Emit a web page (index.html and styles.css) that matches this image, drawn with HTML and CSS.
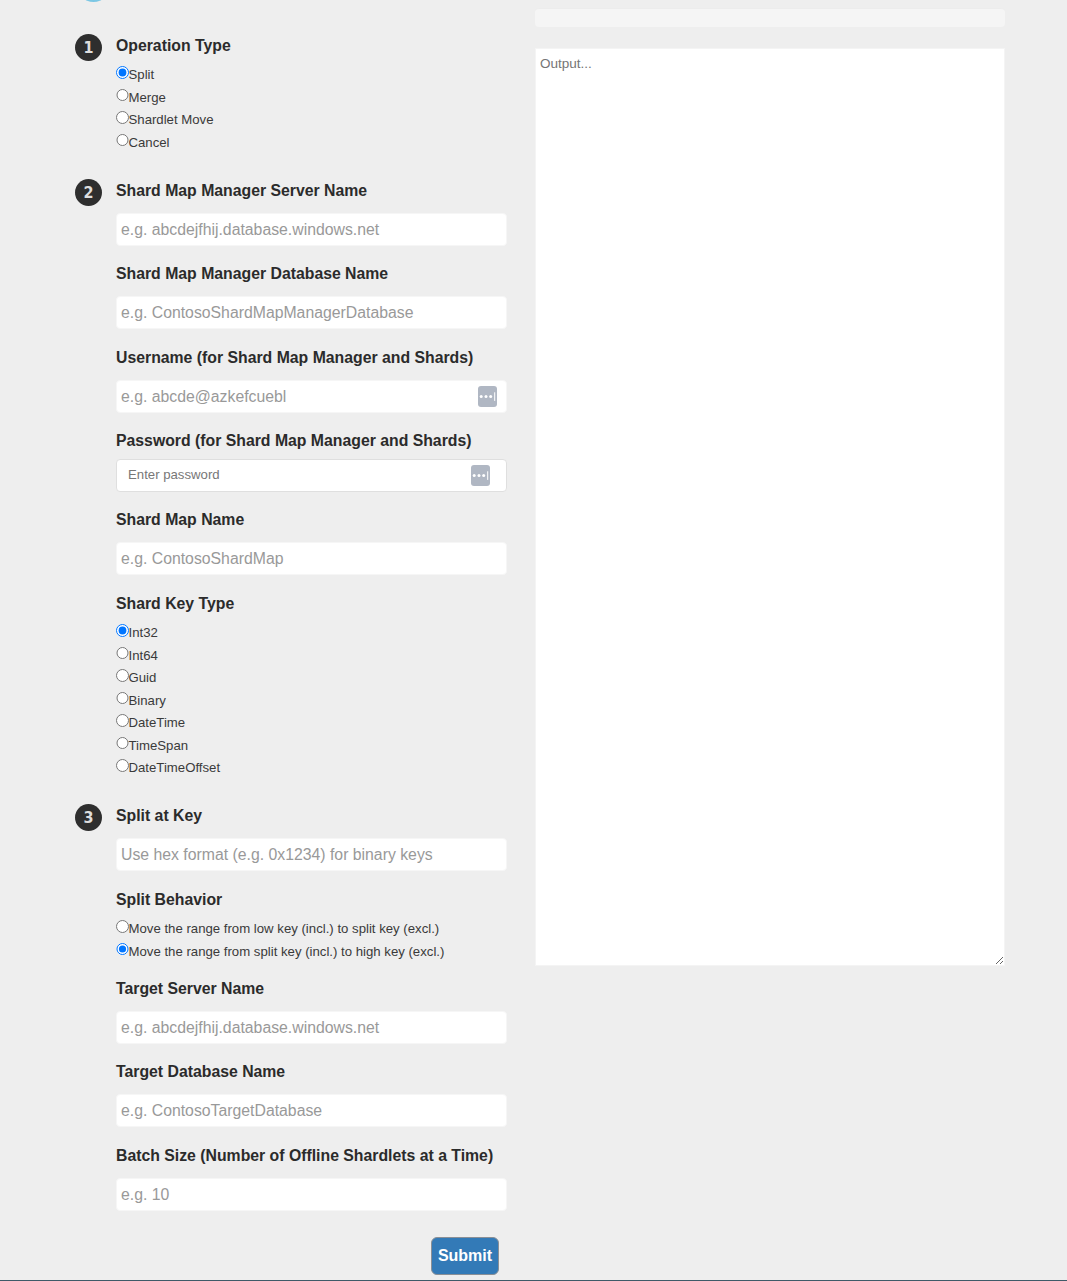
FILE: index.html
```html
<!DOCTYPE html>
<html lang="en">
<head>
<meta charset="utf-8">
<title>Split-Merge</title>
<link rel="stylesheet" href="styles.css">
</head>
<body>
<main class="page">
  <form class="form-col">
    <div class="logo"></div>

    <section class="step step-first">
      <span class="badge">1</span>
      <div class="step-body">
        <h3 class="field-label field-label-radios">Operation Type</h3>
        <div class="radios">
          <label class="radio"><input type="radio" name="op" checked>Split</label>
          <label class="radio"><input type="radio" name="op">Merge</label>
          <label class="radio"><input type="radio" name="op">Shardlet Move</label>
          <label class="radio"><input type="radio" name="op">Cancel</label>
        </div>
      </div>
    </section>

    <section class="step step-second">
      <span class="badge">2</span>
      <div class="step-body">
        <div class="field field-first">
          <h3 class="field-label">Shard Map Manager Server Name</h3>
          <input class="text-input" type="text" placeholder="e.g. abcdejfhij.database.windows.net">
        </div>
        <div class="field">
          <h3 class="field-label">Shard Map Manager Database Name</h3>
          <input class="text-input" type="text" placeholder="e.g. ContosoShardMapManagerDatabase">
        </div>
        <div class="field field-loose">
          <h3 class="field-label">Username (for Shard Map Manager and Shards)</h3>
          <div class="input-wrap">
            <input class="text-input" type="text" placeholder="e.g. abcde@azkefcuebl">
            <svg class="pw-icon pw-icon-user" viewBox="0 0 19 21" aria-hidden="true"><rect width="19" height="21" rx="3" fill="#b0b7c3"/><circle cx="3.2" cy="10.4" r="1.5" fill="#fff"/><circle cx="8" cy="10.4" r="1.5" fill="#fff"/><circle cx="12.7" cy="10.4" r="1.5" fill="#fff"/><path d="M16.7 6.3v8.6" stroke="#fff" stroke-width="1"/></svg>
          </div>
        </div>
        <div class="field">
          <h3 class="field-label field-label-tight">Password (for Shard Map Manager and Shards)</h3>
          <div class="input-wrap">
            <input class="text-input text-input-password" type="password" placeholder="Enter password">
            <svg class="pw-icon pw-icon-pass" viewBox="0 0 19 21" aria-hidden="true"><rect width="19" height="21" rx="3" fill="#b0b7c3"/><circle cx="3.2" cy="10.4" r="1.5" fill="#fff"/><circle cx="8" cy="10.4" r="1.5" fill="#fff"/><circle cx="12.7" cy="10.4" r="1.5" fill="#fff"/><path d="M16.7 6.3v8.6" stroke="#fff" stroke-width="1"/></svg>
          </div>
        </div>
        <div class="field">
          <h3 class="field-label">Shard Map Name</h3>
          <input class="text-input" type="text" placeholder="e.g. ContosoShardMap">
        </div>
        <div class="field field-loose">
          <h3 class="field-label field-label-radios">Shard Key Type</h3>
          <div class="radios">
            <label class="radio"><input type="radio" name="key" checked>Int32</label>
            <label class="radio"><input type="radio" name="key">Int64</label>
            <label class="radio"><input type="radio" name="key">Guid</label>
            <label class="radio"><input type="radio" name="key">Binary</label>
            <label class="radio"><input type="radio" name="key">DateTime</label>
            <label class="radio"><input type="radio" name="key">TimeSpan</label>
            <label class="radio"><input type="radio" name="key">DateTimeOffset</label>
          </div>
        </div>
      </div>
    </section>

    <section class="step step-third">
      <span class="badge">3</span>
      <div class="step-body">
        <div class="field field-first">
          <h3 class="field-label">Split at Key</h3>
          <input class="text-input" type="text" placeholder="Use hex format (e.g. 0x1234) for binary keys">
        </div>
        <div class="field field-loose">
          <h3 class="field-label field-label-radios">Split Behavior</h3>
          <div class="radios">
            <label class="radio"><input type="radio" name="beh">Move the range from low key (incl.) to split key (excl.)</label>
            <label class="radio"><input type="radio" name="beh" checked>Move the range from split key (incl.) to high key (excl.)</label>
          </div>
        </div>
        <div class="field field-after-radios">
          <h3 class="field-label">Target Server Name</h3>
          <input class="text-input" type="text" placeholder="e.g. abcdejfhij.database.windows.net">
        </div>
        <div class="field">
          <h3 class="field-label">Target Database Name</h3>
          <input class="text-input" type="text" placeholder="e.g. ContosoTargetDatabase">
        </div>
        <div class="field field-loose">
          <h3 class="field-label">Batch Size (Number of Offline Shardlets at a Time)</h3>
          <input class="text-input" type="text" placeholder="e.g. 10">
        </div>
        <div class="actions">
          <button class="submit" type="button">Submit</button>
        </div>
      </div>
    </section>
  </form>

  <aside class="output-col">
    <div class="status-bar"></div>
    <textarea class="output" placeholder="Output..."></textarea>
  </aside>
</main>
</body>
</html>
```

FILE: styles.css
```css
* {
  box-sizing: border-box;
}

html,
body {
  margin: 0;
  padding: 0;
  height: 1281px;
  overflow: hidden;
}

body {
  background: #eeeeee;
  font-family: "Liberation Sans", Arial, sans-serif;
  color: #333333;
}

.page {
  display: flex;
  gap: 28px;
  height: 1281px;
  padding-left: 75px;
  border-bottom: 1px solid #3f5a68;
}

.form-col {
  width: 432px;
  flex: none;
}

.logo {
  width: 33px;
  height: 33px;
  margin-top: -31px;
  margin-left: 2px;
  border-radius: 50%;
  background: #7cc7e4;
}

.step {
  display: flex;
  gap: 14px;
}

.step-first {
  margin-top: 32px;
}

.step-second {
  margin-top: 26px;
}

.step-third {
  margin-top: 25.5px;
}

.badge {
  flex: none;
  width: 27px;
  height: 27px;
  border-radius: 50%;
  background: #2e2e2e;
  color: #dedede;
  font-family: "DejaVu Sans Condensed", "DejaVu Sans", sans-serif;
  font-size: 16px;
  font-weight: 700;
  line-height: 27px;
  text-align: center;
}

.step-body {
  width: 391px;
  padding-top: 2px;
}

.field-label {
  margin: 0 0 12px;
  font-size: 15.8px;
  font-weight: 700;
  line-height: 20px;
  color: #2b2b2b;
}

.field-label-radios {
  margin-bottom: 7px;
}

.field-label-tight {
  margin-bottom: 8px;
}

.field {
  margin-top: 18px;
}

.field-loose {
  margin-top: 19px;
}

.field-first {
  margin-top: 0;
}

.field-after-radios {
  margin-top: 17px;
}

.radios {
  display: flex;
  flex-direction: column;
}

.radio {
  display: block;
  height: 22.5px;
  padding-top: 1.2px;
  font-size: 13.2px;
  line-height: 22.5px;
  color: #3a3a3a;
  white-space: nowrap;
}

.radio input {
  width: 12.5px;
  height: 12.5px;
  margin: 0;
  position: relative;
  top: -3.2px;
  vertical-align: middle;
}

.input-wrap {
  position: relative;
}

.text-input {
  display: block;
  width: 100%;
  height: 33px;
  padding: 0 4px;
  border: 1px solid #f6f6f6;
  border-radius: 4px;
  background: #ffffff;
  font-family: inherit;
  font-size: 15.8px;
  color: #333333;
  outline: none;
}

.text-input::placeholder {
  color: #999999;
  opacity: 1;
}

.text-input-password {
  padding: 0 11px 4px;
  border-color: #dfdfdf;
}

.text-input-password::placeholder {
  font-size: 13.2px;
  color: #777777;
}

.pw-icon {
  position: absolute;
  top: 6px;
  width: 19px;
  height: 21px;
}

.pw-icon-user {
  right: 10.4px;
}

.pw-icon-pass {
  right: 17.4px;
}

.actions {
  display: flex;
  justify-content: flex-end;
  margin-top: 26px;
  padding-right: 8px;
}

.submit {
  width: 68px;
  height: 38px;
  padding: 0;
  border: 1px solid #8a8f96;
  border-radius: 6px;
  background: #337ab7;
  color: #ffffff;
  font-family: inherit;
  font-size: 16px;
  font-weight: 700;
}

.output-col {
  width: 470px;
  flex: none;
  padding-top: 8px;
}

.status-bar {
  height: 19px;
  border-radius: 4px;
  background: #f5f5f5;
  border-top: 1px solid #ececec;
}

.output {
  display: block;
  width: 470px;
  height: 918px;
  margin-top: 21px;
  padding: 6px 4px;
  border: 1px solid #f4f4f4;
  border-radius: 0;
  background: #ffffff;
  font-family: inherit;
  font-size: 13.5px;
  line-height: 18px;
  color: #333333;
  outline: none;
}

.output::placeholder {
  color: #757575;
  opacity: 1;
}
```
